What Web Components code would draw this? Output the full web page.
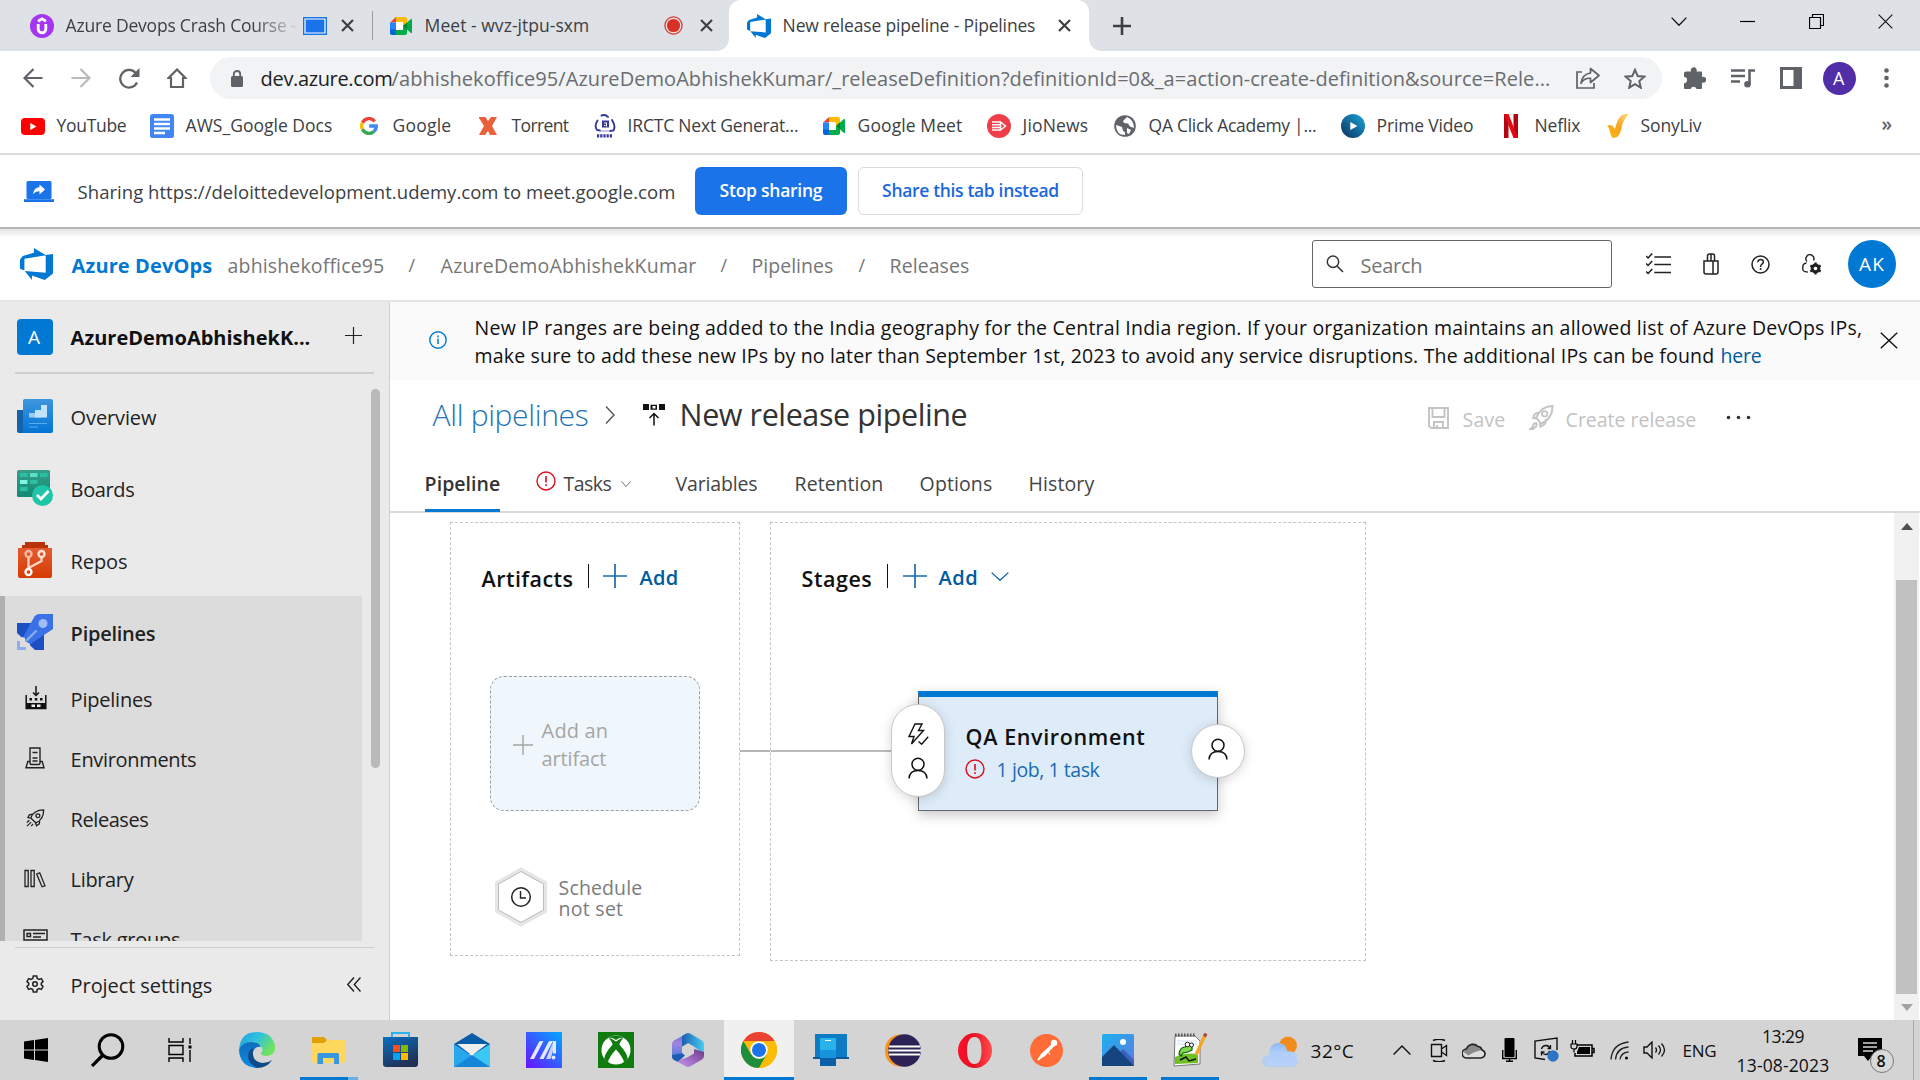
<!DOCTYPE html>
<html lang="en"><head><meta charset="utf-8"><title>New release pipeline - Pipelines</title>
<style>
html,body{margin:0;padding:0}
body{width:1920px;height:1080px;overflow:hidden;background:#fff;font-family:"Open Sans","Noto Sans",sans-serif;color:#3c4043}
</style></head><body>
<desktop-screen></desktop-screen>
<script>
const ICONS={
udemy:[24,24,'<circle cx="12" cy="12" r="12" fill="#a435f0"/><path d="M8.2 10v5a3.8 3.8 0 0 0 7.6 0v-5M8 7.3l4-2.4 4 2.4" fill="none" stroke="#fff" stroke-width="2.8"/>'],
share:[24,18,'<path d="M0 0h24v18H0z" fill="#1a73e8"/><path d="M2 2h20v14h-20z" fill="none" stroke="#fff" stroke-width="1.2"/>'],
x:[13,13,'<path d="M1 1l11 11M12 1L1 12" stroke="#3c4043" stroke-width="2.2"/>'],
thinx:[16,16,'<path d="M.7.7l14.6 14.6M15.3.7L.7 15.3" stroke="#111" stroke-width="1.2"/>'],
meet:[22,18,'<path d="M6 0H15q2 0 2 2V6L13 9V5H6z" fill="#ffba00"/><path d="M0 5.5L6 0V5.5z" fill="#ea4335"/><path d="M0 5.5H6V13H0z" fill="#2684fc"/><path d="M0 12.5H6V18H2q-2 0-2-2z" fill="#0066da"/><path d="M6 18V13H13V9L17 12V16q0 2-2 2z" fill="#00ac47"/><path d="M13 9L21 2q1-.5 1 .5V15.500q0 1-1 .4z" fill="#00ac47"/><path d="M13 9L17 5.500V12.500z" fill="#00832d"/><path d="M6 5h7v8H6z" fill="#fff"/>'],
rec:[19,19,'<circle cx="9.500" cy="9.500" r="8.600" fill="none" stroke="#d93025" stroke-width="1.200"/><circle cx="9.500" cy="9.500" r="6.600" fill="#d93025"/>'],
devops:[24,24,'<path d="M24 4.500V19.200L18 24 8.700 20.700V24L3.400 17.200 18.700 18.500V5.300zM18.900 5.400L10.100 0V3.600L2 6 0 8.600v6.900L3.200 16.900V8.100z" fill="#0078d4"/>'],
plus:[18,18,'<path d="M9 0v18M0 9h18" stroke="#3c4043" stroke-width="2.600"/>'],
thinplus:[24,24,'<path d="M12 0v24M0 12h24" stroke="currentColor" stroke-width="1.700"/>'],
chev:[16,9,'<path d="M.6.6L8 8.300 15.400.6" fill="none" stroke="currentColor" stroke-width="1.300"/>'],
up:[18,10,'<path d="M.6 9.400L9 1 17.400 9.400" fill="none" stroke="#111" stroke-width="1.400"/>'],
min:[15,15,'<path d="M0 7.500h15" stroke="#000" stroke-width="1.200"/>'],
restore:[15,15,'<path d="M.5 3.500h11v11H.5zM3.500 3.500V.5h11v11h-3" fill="none" stroke="#000" stroke-width="1.200"/>'],
back:[20,20,'<path d="M19.500 10H2M10.500 1L1.500 10l9 9" fill="none" stroke="currentColor" stroke-width="2.200"/>'],
fwd:[20,20,'<path d="M.5 10H18M9.500 1l9 9-9 9" fill="none" stroke="currentColor" stroke-width="2.200"/>'],
reload:[21,21,'<path d="M18 14.500a8.800 8.800 0 1 1-1.300-9.500l2.500 2.500" fill="none" stroke="#5f6368" stroke-width="2.300"/><path d="M20.500 0v9h-9z" fill="#5f6368"/>'],
home:[20,20,'<path d="M10 1.500L1.500 10H4v9h12v-9h2.500z" fill="none" stroke="#5f6368" stroke-width="2.200"/>'],
lock:[12,17,'<rect y="6" width="12" height="11" rx="1.500" fill="#5f6368"/><path d="M2.800 7V4.200a3.200 3.200 0 0 1 6.400 0V7" fill="none" stroke="#5f6368" stroke-width="1.800"/>'],
send:[24,22,'<path d="M6 5H1v16h17v-5" fill="none" stroke="#5f6368" stroke-width="1.700"/><path d="M14.500 6V1.500l8.500 7-8.500 7V11.300q-6.500-.4-9.500 5Q6 7.500 14.500 6z" fill="none" stroke="#5f6368" stroke-width="1.700" stroke-linejoin="round"/>'],
star:[22,21,'<path d="M11 1.800l2.700 6.300 6.600.6-5 4.400 1.500 6.600L11 16.200l-5.800 3.500 1.500-6.600-5-4.400 6.600-.6z" fill="none" stroke="#5f6368" stroke-width="2"/>'],
puzzle:[22,22,'<path d="M2 4.500H7a3 3 0 1 1 5.500 0H17q1 0 1 1V10a3 3 0 1 1 0 5.500V21q0 1-1 1H12.500a3 3 0 0 0-5.800 0H1q-1 0-1-1V16.200A3 3 0 0 0 0 10V6q0-1.500 2-1.500z" fill="#5f6368"/>'],
music:[24,20,'<path d="M0 2.500h14M0 8h14M0 13.500h9" stroke="#5f6368" stroke-width="2.300"/><path d="M18.500 16V2.500H24" fill="none" stroke="#5f6368" stroke-width="2.600"/><circle cx="16.500" cy="16.200" r="3.300" fill="#5f6368"/>'],
panel:[22,22,'<path d="M1.500 1.500h19v19h-19z" fill="#fff" stroke="#5f6368" stroke-width="3"/><path d="M13.500 1.500h7v19h-7z" fill="#5f6368"/>'],
dots:[5,20,'<g fill="#5f6368"><circle cx="2.500" cy="2.500" r="2.300"/><circle cx="2.500" cy="10" r="2.300"/><circle cx="2.500" cy="17.500" r="2.300"/></g>'],
youtube:[24,17,'<rect width="24" height="17" rx="4" fill="#f00"/><path d="M9.300 5v7l6.200-3.500z" fill="#fff"/>'],
docs:[24,24,'<rect width="24" height="24" rx="2.500" fill="#4285f4"/><path d="M4 5.500h16M4 10h16M4 14.500h16M4 19h11" stroke="#fff" stroke-width="2.400"/>'],
google:[18,18,'<g fill="none" stroke-width="3.400"><path d="M14.700 4.300A7.300 7.300 0 0 0 2.500 5.700" stroke="#ea4335"/><path d="M2.500 5.700a7.300 7.300 0 0 0 0 6.600" stroke="#fbbc05"/><path d="M2.500 12.300a7.300 7.300 0 0 0 11.400 2.200" stroke="#34a853"/><path d="M13.900 14.500A6.500 6.500 0 0 0 16.200 9H9.200" stroke="#4285f4"/></g>'],
torrent:[18,18,'<path d="M0 0H6.500L9 4 12 0h6l-1 2-4 7 5 9h-7L9 14l-3 4H0l1-2 4-7L0 1z" fill="#e8613a"/>'],
irctc:[22,24,'<g fill="none" stroke="#34379a" stroke-width="1.900" stroke-linecap="round"><path d="M7.500 1.500q4-1.500 6.500 1.500"/><path d="M3.500 6.500Q0 12 3 16l3 .5"/><path d="M18 6q4 6 1.500 10.500l-3.500.5"/></g><path d="M8 6.500h7v7H8z" fill="#34379a"/><path d="M10 9h2M12.500 8.500v4M10 11.500h1.500" stroke="#fff"/><path d="M6 17h10" stroke="#9fa1d4" stroke-width="1.200"/><path d="M3 21.800h16" stroke="#34379a" stroke-width="3.200" stroke-dasharray="2.200 1"/>'],
jio:[24,24,'<circle cx="12" cy="12" r="12" fill="#ef3e4a"/><path d="M5 8h8M5 10.700h8M5 13.400h8M5 16h8" stroke="#fff" stroke-width="1.500"/><path d="M13.500 8L18.500 12l-5 4z" fill="none" stroke="#fff" stroke-width="1.500"/>'],
globe:[22,22,'<circle cx="11" cy="11" r="10.800" fill="#5f6368"/><path d="M2 10l6 2 1 4 2 1v3q-9 0-9-10zM13 2l-4 4 1 2 4 .5 2 3 4 1.500Q20 5 13 2zM13 13l4 2-2 4-2-1z" fill="#fff"/>'],
prime:[24,24,'<defs><linearGradient id="p" x1="1" x2="0" y2="1"><stop stop-color="#1aa8dc"/><stop offset="1" stop-color="#0b2e5c"/></linearGradient></defs><circle cx="12" cy="12" r="12" fill="url(#p)"/><path d="M9.300 8v8l7-4z" fill="#fff"/>'],
netflix:[14,24,'<path d="M0 0h4.500v24H0zM9.500 0H14v24H9.500z" fill="#b1060f"/><path d="M0 0h4.500L14 24H9.500z" fill="#e50914"/>'],
sony:[22,24,'<defs><linearGradient id="s" x1="1" x2="0" y2="1"><stop stop-color="#fde08a"/><stop offset=".5" stop-color="#f4a41c"/><stop offset="1" stop-color="#fcb813"/></linearGradient></defs><path d="M0 12q4-3 8 3Q11 3 15 1q4-2 7-1-5 5-7 12-2 12-8 12-3 0-4-6-1-5-3-6z" fill="url(#s)"/>'],
infoshare:[30,21,'<rect x="2.500" width="25" height="18" rx="1.500" fill="#1a73e8"/><path d="M0 18.200h30v2.800H0z" fill="#1a73e8"/><path d="M15.500 6V3.500L21 8.500l-5.500 5V10.300q-4-.3-6.500 3Q9.500 7 15.500 6z" fill="#fff"/>'],
search:[18,18,'<circle cx="7" cy="6.700" r="5.700" fill="none" stroke="#333" stroke-width="1.500"/><path d="M11 11l6 6" stroke="#333" stroke-width="1.600"/>'],
list:[24,22,'<path d="M8 4h16M8 11.500h16M8 19.500h16M0 3l2 2 4-4.500M0 10.500l2 2L6 8M0 18.500l2 2L6 16" fill="none" stroke="#222" stroke-width="1.500"/>'],
bag:[16,22,'<path d="M1 8h14v11q0 2-2 2H3q-2 0-2-2zM10 8v13M4.500 8V3q0-2 2-2h3q2 0 2 2v5M8 1v7" fill="none" stroke="#222" stroke-width="1.500"/>'],
help:[19,19,'<circle cx="9.500" cy="9.500" r="8.500" fill="none" stroke="#222" stroke-width="1.500"/><path d="M6.900 7.300q0-2.800 2.700-2.800t2.700 2.600Q12.200 8.400 10.500 9.500 9.600 10.200 9.600 12" fill="none" stroke="#222" stroke-width="1.500"/><circle cx="9.600" cy="14" r="1" fill="#222"/>'],
usergear:[20,21,'<path d="M5 7.500A4 4 0 1 1 11.500 6.500M4.500 9Q.8 9.500.8 13v3q1.200 2.200 5 2" fill="none" stroke="#222" stroke-width="1.400"/><circle cx="13.500" cy="14.500" r="3.400" fill="none" stroke="#222" stroke-width="3"/><path d="M13.500 8.500v12M8.300 11.500l10.400 6M18.700 11.500l-10.400 6" stroke="#222" stroke-width="2.300"/><circle cx="13.500" cy="14.500" r="1.800" fill="#fff"/>'],
overview:[36,34,'<defs><linearGradient id="o" x2="0" y2="1"><stop stop-color="#3e96df"/><stop offset="1" stop-color="#0274d5"/></linearGradient></defs><path d="M0 11h8v23H2q-2 0-2-2z" fill="#1462aa"/><path d="M6 1.500Q6 0 8 0h26q2 0 2 2v30q0 2-2 2H4q2 0 2-2z" fill="url(#o)"/><path d="M12 14h6v-3h6v7.500H12z" fill="#9ccbf4"/><path d="M18 11h6V6h6v12.500H18z" fill="#c3e2fb"/><path d="M12 24.500h18M12 28h9" stroke="#56acec"/>'],
boards:[36,36,'<defs><linearGradient id="b" x2="0" y2="1"><stop stop-color="#369f89"/><stop offset="1" stop-color="#118b73"/></linearGradient></defs><rect width="33" height="27" rx="1.500" fill="url(#b)"/><path d="M3 3h7.500v4H3zM23 3h7.500v4H23zM13 10h7.500v4H13zM3 17h7.500v4H3z" fill="#2dbfa3"/><path d="M13 3h7.500v4H13z" fill="#5cdfc7"/><path d="M3 10h7.500v4H3z" fill="#7ff5df"/><circle cx="25.500" cy="25.500" r="10.500" fill="#1fc5a8"/><path d="M20 25l4 4 7.500-8" fill="none" stroke="#fff" stroke-width="2.800"/>'],
repos:[34,36,'<defs><linearGradient id="r" x2="0" y2="1"><stop stop-color="#e35c31"/><stop offset="1" stop-color="#d63b02"/></linearGradient></defs><path d="M7 0h20v3h3v4H4V3h3z" fill="#b8330a"/><path d="M0 6h34v28q0 2-2 2H2q-2 0-2-2z" fill="url(#r)"/><g fill="none" stroke="#f9b9a0" stroke-width="2.300"><path d="M10.500 15v12M23.500 15.500v3.500l-12 6.500" stroke="#ffd5c5"/><circle cx="10.500" cy="12" r="3"/><circle cx="23.500" cy="12" r="3" stroke="#ffe4da"/><circle cx="10.500" cy="30" r="3" stroke="#fff"/></g>'],
pipes:[36,36,'<path d="M0 9h14l13 12v15h-9L0 19z" fill="#1d4fc4"/><path d="M17.500 2.500Q19 0 22 0h14v15L12 31l-7-6z" fill="#3a71e6"/><path d="M5 23l3 1v3l5 3v3H3l-3-2V24z" fill="#dcdcdc"/><path d="M0 27h3v6h6v3H0z" fill="#8cacf0"/><path d="M9 27L19.500 16.500" stroke="#8cabf4" stroke-width="2.400"/><circle cx="26" cy="9.500" r="4.500" fill="#a0bcfa"/>'],
factory:[22,24,'<path d="M11 0v9M8 6.500L11 9.500 14 6.500M1.200 9v13.500h19.600V9" fill="none" stroke="#111" stroke-width="1.500"/><path d="M4.500 12h2.500v2.500H4.500zM9.800 12h2.500v2.500H9.800zM15 12h2.500v2.500H15zM1 17h20v6H1z" fill="#111"/><path d="M6.500 18.500h3.500v2.500H6.500zM12 18.500h3.500v2.500H12z" fill="#eee"/>'],
env:[20,22,'<path d="M5 16V1h10v15q0 1.500-1.500 1.500H6.500Q5 17.500 5 16zM5 14.500H2.800L1 20.800h18l-1.800-6.300H15M7.500 5.500h5M7.500 11h5M7.500 14h5" fill="none" stroke="#222" stroke-width="1.400"/>'],
rocket:[20,20,'<path d="M5 10Q8 1 18.500 1 19 11 10.500 15.500zM8 5.500L3.500 6.500 2 9.500l4 1M14.500 12l-.5 4.500L11 18.500 9.500 14" fill="none" stroke="currentColor" stroke-width="1.400"/><circle cx="12.500" cy="7.500" r="2" fill="none" stroke="currentColor" stroke-width="1.400"/><path d="M3.500 12.500L1 15M5.500 14.500L1 19M7.500 16.500L5.500 19" stroke="currentColor" stroke-width="1.300"/>'],
rocket2:[24,24,'<path d="M7 12Q11 1.500 22.500 1 23 13 11.500 18zM10 7.500Q5 7 4 12.500l3 .5M16 13.500Q17 18.500 11 21l-.500-3.500M4 20.500q0-3.500 3-3 1.500 3-3 5.500H1.500z" fill="none" stroke="currentColor" stroke-width="1.900"/><circle cx="15" cy="8.500" r="2.600" fill="none" stroke="currentColor" stroke-width="1.700"/>'],
library:[22,19,'<path d="M1 1.500h3.200v16H1zM7 1.500h3.200v16H7zM12.700 5l3-1.200 5.300 13-3 1z" fill="none" stroke="#222" stroke-width="1.300"/>'],
task:[25,22,'<path d="M1 1h23v10H1z" fill="none" stroke="#222" stroke-width="1.500"/><path d="M4 4.500h3.500v3H4zM10 4.500h12M10 8h8" fill="none" stroke="#222" stroke-width="1.400"/>'],
gear:[18,18,'<path d="M7.300 1h3.400l.5 2.400 1.900 1 2.300-.8L17 6.500l-1.700 1.600v1.800L17 11.500l-1.600 2.900-2.300-.8-1.900 1-.5 2.400H7.300l-.5-2.400-1.900-1-2.300.8L1 11.500l1.700-1.600V8.100L1 6.500l1.600-2.900 2.300.8 1.900-1z" fill="none" stroke="#222" stroke-width="1.500"/><circle cx="9" cy="9" r="2.300" fill="none" stroke="#222" stroke-width="1.500"/>'],
dbl:[14,15,'<path d="M7 .5L.8 7.500 7 14.500M13.500.5L7.300 7.500l6.200 7" fill="none" stroke="#222" stroke-width="1.400"/>'],
info:[18,18,'<circle cx="9" cy="9" r="8.200" fill="none" stroke="#0078d4" stroke-width="1.400"/><path d="M9 7.500V13M9 4.500v1.700" stroke="#0078d4" stroke-width="1.500"/>'],
gt:[10,18,'<path d="M1 .5L9 9l-8 8.500" fill="none" stroke="#555" stroke-width="1.400"/>'],
relicon:[22,22,'<path d="M0 0h6v6H0zM16 0h6v6h-6zM7.500.7h6.500v5H7.500z" fill="#111"/><path d="M9.500 2h3v2.500h-3z" fill="#fff"/><path d="M11 21.500V9.500M6.500 14L11 9.500l4.500 4.500" fill="none" stroke="#111" stroke-width="1.500"/>'],
save:[21,22,'<path d="M1 1h19v20H3l-2-2zM4.500 1v9h12V1M6 21v-6h9v6M9 18v3" fill="none" stroke="#c4c4c4" stroke-width="1.900"/>'],
more:[26,5,'<g fill="#333"><circle cx="2.500" cy="2.500" r="1.800"/><circle cx="12.500" cy="2.500" r="1.800"/><circle cx="22.500" cy="2.500" r="1.800"/></g>'],
alert:[20,20,'<circle cx="10" cy="10" r="9" fill="none" stroke="#e00b1c" stroke-width="1.400"/><path d="M10 5v6.500M10 13.200v1.700" stroke="#e00b1c" stroke-width="1.600"/>'],
hex:[54,60,'<path d="M27 2.500L51 16v28L27 57.500 3 44V16z" fill="#fff" stroke="#e6e6e6" stroke-width="4"/><path d="M27 4.500L49.500 17v26L27 55.500 4.500 43V17z" fill="none" stroke="#bbb"/><circle cx="27" cy="30" r="9.300" fill="none" stroke="#222" stroke-width="1.500"/><path d="M26.500 24v7h5.500" fill="none" stroke="#222" stroke-width="1.400"/>'],
bolt:[21,22,'<path d="M7 1H14L10.500 7.500H15.500L3.500 21 6 13.500H1zM10.500 18.500l3.200 2.700 6.500-7.500" fill="none" stroke="#111" stroke-width="1.400"/>'],
person:[20,22,'<circle cx="10" cy="7.200" r="6" fill="none" stroke="#111" stroke-width="1.500"/><path d="M1 21.500q.5-8 9-8t9 8" fill="none" stroke="#111" stroke-width="1.500"/>'],
win:[24,24,'<path d="M0 3.500L10 2v9.500H0zM11 1.900L24 0v11.500H11zM0 12.500h10V22L0 20.500zM11 12.500h13V24l-13-1.900z" fill="#000"/>'],
tsearch:[34,34,'<circle cx="20" cy="13.500" r="11.800" fill="none" stroke="#000" stroke-width="3"/><path d="M11.500 22.500L1 33" stroke="#000" stroke-width="3.200"/>'],
tview:[24,24,'<path d="M1 0v4h14V0M1 24v-4h14v4M1 7.500h14v9H1zM22 0v6M22 12v12" fill="none" stroke="#000" stroke-width="1.400"/><path d="M20.500 7.500h3v3h-3z"/>'],
edge:[36,36,'<defs><linearGradient id="e" x2="1" y2=".5"><stop stop-color="#1d9de0"/><stop offset=".5" stop-color="#2fc2df"/><stop offset="1" stop-color="#6fe35e"/></linearGradient><linearGradient id="e2" x2="0" y2="1"><stop stop-color="#0d6dbd"/><stop offset="1" stop-color="#0f8bdf"/></linearGradient></defs><path d="M0 18Q1 0 18 0q15 0 18 14 1 9-8 10-6 0-6-3 3-3 0-7-6-6-14-3-6 2-8 7z" fill="url(#e)"/><path d="M0 18Q3 10 12 10q8 0 10 5-6-1-8 5-1 8 6 14l-2 2Q1 35 0 18z" fill="url(#e2)"/><path d="M14 20q-1 10 10 11 5 0 9-3-5 8-15 8-9-5-9-12 0-6 5-8z" fill="#114a8b"/>'],
folder:[33,27,'<path d="M0 0h12l3 3-2 4H0z" fill="#e0a100"/><path d="M0 6h12l3-3h18v21q0 2-2 2H2q-2 0-2-2z" fill="#ffd75e"/><path d="M5.500 27V17.500q0-1.500 1.500-1.500h18.500q1.500 0 1.500 1.500v9.500h-5v-6h-11v6z" fill="#3a96dd"/>'],
store:[35,36,'<defs><linearGradient id="t" x2=".5" y2="1"><stop stop-color="#0a6fc2"/><stop offset="1" stop-color="#203156"/></linearGradient></defs><path d="M9 5V1h17v4" fill="none" stroke="#2db2ec" stroke-width="2"/><path d="M0 5h35v27q0 3-3 3H3q-3 0-3-3z" fill="url(#t)"/><path d="M10 13h7v7h-7z" fill="#f25022"/><path d="M18 13h7v7h-7z" fill="#7fba00"/><path d="M10 21h7v7h-7z" fill="#00a4ef"/><path d="M18 21h7v7h-7z" fill="#ffb900"/>'],
mail:[36,34,'<path d="M0 11L18 0l18 11v10H0z" fill="#0a5ba8"/><path d="M0 11l18 12v11H0z" fill="#28a8ea"/><path d="M36 11v23H0z" fill="#3cc8f5"/><path d="M0 34h36L18 22z" fill="#1686d9"/><path d="M3 11h30L18 22.500z" fill="#eee"/>'],
asus:[36,36,'<defs><linearGradient id="a" x1="1" x2="0" y2="1"><stop stop-color="#00a8ff"/><stop offset="1" stop-color="#6a12ff"/></linearGradient></defs><path d="M0 0h36v36H0z" fill="url(#a)"/><path d="M4 27h4L17.500 9H15q-1.500 0-2.200 1.300zM13.500 27h4L27 9h-2.500q-1.500 0-2.200 1.300z" fill="#e3e8ff"/><path d="M20 27h4.500L30 9h-2.500z" fill="#c9d4ff"/><path d="M27 9h3v12.500h-3z" fill="#e3e8ff"/><circle cx="27.500" cy="25.500" r="1.900" fill="#dfe6ff"/>'],
xbox:[36,36,'<path d="M0 0h36v36H0z" fill="#107c10"/><circle cx="18" cy="18" r="14.500" fill="#fff"/><path d="M9 6.600Q13 4.500 18 8q5-3.500 9-1.400-4-3.100-9-3.100T9 6.600zM10.500 5.700Q14 6.500 18 9.500q4-3 7.500-3.800Q22 9.500 21.300 12.500 30 22 29.600 27q-1.600 2-3.600 3.300Q25 25 18 17.500 11 25 10 30.300 8 29 6.400 27 6 22 14.700 12.500 14 9.500 10.500 5.700z" fill="#107c10"/>'],
m365:[32,34,'<defs><linearGradient id="m" x2="0" y2="1"><stop stop-color="#5b6fd0"/><stop offset=".4" stop-color="#a583e0"/><stop offset="1" stop-color="#4f7fdb"/></linearGradient><linearGradient id="m2" x2="1"><stop stop-color="#1c5fb0"/><stop offset="1" stop-color="#45cdf2"/></linearGradient><linearGradient id="m3" x1="1" x2="0" y2="1"><stop stop-color="#6a3a86"/><stop offset="1" stop-color="#c996f2"/></linearGradient></defs><path d="M14 1L2 7.500Q0 8.600 0 11v13l10-4v-6.500l6-3.500z" fill="url(#m)"/><path d="M14 .6Q16 -.4 18 .6L30 7.500Q32 8.600 32 11v10L22 13.500 16 10l-6 3.500V3z" fill="url(#m2)"/><path d="M0 22l10-2 3 2.500L6 29 2 27Q0 26 0 24z" fill="#1d5cb5"/><path d="M22 16l10 3v4q0 2.400-2 3.500L18 33.400q-2 1-4 0L5 28.500l11-4.500 6-3.500z" fill="url(#m3)"/>'],
chrome:[36,36,'<circle cx="18" cy="18" r="18" fill="#fbbc05"/><path d="M2.400 9A18 18 0 0 1 33.600 9H18z" fill="#ea4335"/><path d="M2.400 9L10.200 22.500 18 27l7.800-4.500L18 36A18 18 0 0 1 2.400 9z" fill="#1e8e3e"/><path d="M25.800 22.500L18 36A18 18 0 0 0 33.600 9H18z" fill="#fbbc05"/><circle cx="18" cy="18" r="8.700" fill="#fff"/><circle cx="18" cy="18" r="7" fill="#1a73e8"/>'],
phone:[36,32,'<path d="M2 0h32v24H2z" fill="#0f7ac4"/><path d="M0 23h36v2H0z" fill="#0a5a9c"/><rect x="7" y="4" width="16" height="28" rx="1" fill="#28b4ea"/><path d="M7 24h16v8H7z" fill="#0c5ea8"/><path d="M7 16h16v8H7z" fill="#1793db"/><path d="M12 6.500h6" stroke="#fff"/>'],
eclipse:[36,33,'<path d="M16 0Q0 2 0 16.500T16 33Q5 28 5 16.500T16 0z" fill="#f7941e"/><circle cx="19.500" cy="16.500" r="16.300" fill="#2c2255"/><path d="M4 12.500h31M3.500 16.500h32.500M4 20.500h31" stroke="#fff" stroke-width="1.900"/>'],
opera:[34,35,'<defs><linearGradient id="q" x2="1"><stop stop-color="#fb1128"/><stop offset=".45" stop-color="#e81022"/><stop offset="1" stop-color="#ff4d4d"/></linearGradient></defs><path fill-rule="evenodd" d="M17 0a17 17.500 0 0 1 0 35 17 17.500 0 0 1 0-35zM16.500 4C11 4 9 10 9 17.500S11 31 16.500 31 23.500 25 23.500 17.500 22 4 16.500 4z" fill="url(#q)"/>'],
postman:[33,33,'<circle cx="16.500" cy="16.500" r="16.500" fill="#ff6c37"/><circle cx="24" cy="9" r="3.200" fill="#fff"/><path d="M12 20L22 11l1 1.500-9 9.500zM12 20l-4 6 7-5z" fill="#fff" stroke="#fff" stroke-width="1.500"/><path d="M18 17l2 4" stroke="#fff"/>'],
photos:[32,32,'<defs><linearGradient id="h" x2="1" y2="1"><stop stop-color="#1fb0ef"/><stop offset="1" stop-color="#5b7be0"/></linearGradient></defs><rect width="32" height="32" rx="1.500" fill="url(#h)"/><circle cx="21" cy="8" r="3" fill="#fff"/><path d="M18 18l3-3L32 26v6H18z" fill="#3c60bd"/><path d="M0 23L12 11 32 32H0z" fill="#15457f"/>'],
npp:[35,34,'<path d="M2 3h20l5 5v23L1 33z" fill="#fff" stroke="#777"/><path d="M2 2h20" stroke="#555" stroke-width="3" stroke-dasharray="1.500 1.500"/><path d="M4 8h20M4 11h20" stroke="#cde"/><path d="M2 24q10-5 23-3v9L2 31z" fill="#6cc024"/><path d="M6 21q1-7 6-7 4-4 7-1v4l-4 2-5 1-2 3z" fill="#7bdc4a" stroke="#151" stroke-width="1.200"/><circle cx="14.500" cy="11.500" r="2.300" fill="#fff" stroke="#222"/><circle cx="18.500" cy="12" r="2" fill="#fff" stroke="#222"/><path d="M7 27l6-3 3 4 7-2" stroke="#111" stroke-width="1.400" fill="none"/><path d="M23 22L32 2" stroke="#f5a623" stroke-width="3.200"/><path d="M31.500 3.500l1.500-3" stroke="#a44" stroke-width="3.200"/>'],
weather:[37,31,'<defs><linearGradient id="w" x2="0" y2="1"><stop stop-color="#8fbaf6"/><stop offset="1" stop-color="#d9e8fc"/></linearGradient></defs><circle cx="26" cy="9.500" r="9" fill="#f28c1e"/><path d="M8 30a8 8 0 0 1-1-12Q8 7 16 7q8 0 9 8 10 0 11 7 0 8-9 8z" fill="url(#w)"/><path d="M6 31Q0 30 0 25q0-6 8-6 3-5 9-3 4 2 4 5 3-3 8-2 7 3 7 7 0 5-7 5z" fill="#aecbf8" opacity=".75"/>'],
meetnow:[18,23,'<path d="M3 1.500q6-2.500 12 0M3 21.500q6 2.500 12 0M1.500 5.500h10v12h-10zM11.500 10l5-3.500v10l-5-3.500" fill="none" stroke="#111" stroke-width="1.400"/>'],
cloud:[24,17,'<path d="M5 16a4.500 4.500 0 0 1-.6-9A7 7 0 0 1 16 4.500q3 0 4 3.500 3 1 3 4t-4 4z" fill="#ddd"/><path d="M1.500 10Q2 7.500 5 7q.5-5 5-5.500 4 0 5.500 3.500 3 0 4 3l-8 2.500-5 3z" fill="#8a8a8a"/><path d="M5 16a4.500 4.500 0 0 1-.6-9A7 7 0 0 1 16 4.500q3 0 4 3.500 3 1 3 4t-4 4z" fill="none" stroke="#222" stroke-width="1.600"/>'],
mic:[15,24,'<rect x="2.500" width="10" height="19" rx="1" fill="#000"/><path d="M.7 12v8.500h13.600V12M7.500 20v3M4 23.300h7" fill="none" stroke="#000" stroke-width="1.400"/>'],
sync:[25,25,'<path d="M23 13V1L1 4v17l10 1.500" fill="none" stroke="#111" stroke-width="1.400"/><path d="M7.500 12q1-3.500 4.500-3.500 3 0 4 3M16.500 8v3.500h-3M15.500 14q-1 3.500-4 3.500-2.500 0-4-2.500M7.500 18.500V15h3" fill="none" stroke="#111" stroke-width="1.300"/><circle cx="19" cy="19" r="5.700" fill="#2d74c4"/>'],
battery:[25,18,'<path d="M6 5h16v11H5v-3M22 8.500h2v4h-2" fill="none" stroke="#000" stroke-width="1.500"/><path d="M9 7h11v7H7v-2z"/><path d="M1 4h6v2.500q0 2.500-3 2.500T1 6.500zM2.500 4V0M5.500 4V0M4 9.500v3" fill="#d4d4d4" stroke="#000" stroke-width="1.200"/>'],
wifi:[19,19,'<path d="M1 18.500Q2 3 18.500 1M5.500 18.500Q6.500 7 18.500 6M10 18.500Q11 11.500 18.500 11" fill="none" stroke="#222" stroke-width="1.300"/><circle cx="16.500" cy="17" r="1.500"/>'],
vol:[23,18,'<path d="M1 6h3l5-5v16l-5-5H1z" fill="none" stroke="#111" stroke-width="1.400"/><path d="M12.500 6.500q2 2.500 0 5M15.500 4.500q4 4.500 0 9M18.500 2.500q6 6.500 0 13" fill="none" stroke="#111" stroke-width="1.300"/>'],
note:[24,24,'<path d="M0 0h24v18H14l-4 5-4-5H0z" fill="#000"/><path d="M5 5h14M5 9h14M5 13h10" stroke="#d4d4d4" stroke-width="1.300"/>'],
tri:[12,7,'<path d="M0 7h12L6 0z" fill="#505050"/>'],
trid:[12,7,'<path d="M0 0h12L6 7z" fill="#a3a3a3"/>']
};
const px=(el,a)=>Number(el.getAttribute(a)||0);
class UiIcon extends HTMLElement{connectedCallback(){if(this.shadowRoot)return;
 const [vw,vh,s]=ICONS[this.getAttribute('name')],w=px(this,'w')||vw,h=px(this,'h')||vh*(w/vw);
 this.attachShadow({mode:'open'}).innerHTML=`<style>:host{display:block;flex:none;width:${w}px;height:${h}px;margin-left:${px(this,'g')}px;margin-top:${px(this,'t')}px}svg{display:block}</style><svg width="${w}" height="${h}" viewBox="0 0 ${vw} ${vh}" preserveAspectRatio="none">${s}</svg>`;}}
customElements.define('ui-icon',UiIcon);
/* A single text line whose tracking is adjusted so that it fills its column. */
class UiText extends HTMLElement{connectedCallback(){if(this.shadowRoot)return;
 const w=px(this,'w'),s=px(this,'s')||20,l=px(this,'l')||Math.round(s*1.4);
 this.attachShadow({mode:'open'}).innerHTML=`<style>:host{display:block;flex:none;white-space:nowrap;width:${w}px;height:${l}px;line-height:${l}px;font-size:${s}px;font-weight:${this.getAttribute('b')||400};${this.hasAttribute('c')?'color:'+this.getAttribute('c')+';':''}margin-left:${px(this,'g')}px;margin-top:${px(this,'t')}px}span{display:inline-block;margin-left:-.4px}</style><span><slot></slot></span>`;
 const sp=this.shadowRoot.querySelector('span'),n=this.textContent.length;
 sp.style.letterSpacing=((w+.7-sp.getBoundingClientRect().width)/n)+'px';}}
customElements.define('ui-text',UiText);
const I=(n,w,g=0,h='',t=0,c='')=>`<ui-icon name="${n}" w="${w}" g="${g}" h="${h}" t="${t}" ${c?`style="color:${c}"`:''}></ui-icon>`;
const T=(x,w,s,g=0,c='',b='',t=0,l='')=>`<ui-text w="${w}" s="${s}" g="${g}" t="${t}" ${l?`l="${l}"`:''} ${c?`c="${c}"`:''} ${b?`b="${b}"`:''}>${x}</ui-text>`;
const def=(n,css,html)=>customElements.define(n,class extends HTMLElement{connectedCallback(){if(this.shadowRoot)return;this.attachShadow({mode:'open'}).innerHTML=`<style>:host{box-sizing:border-box;flex:none}*{box-sizing:border-box}${css}</style>${html}`}});

def('browser-tabs',`:host{display:flex;align-items:center;height:51px;background:#dee1e6}.tab{display:flex;align-items:center;height:51px;flex:none}.a{width:373px}.b{width:356px}.c{width:360px;background:#fff;border-radius:12px 12px 0 0;position:relative}.c:before,.c:after{content:"";position:absolute;bottom:0;width:12px;height:12px}.c:before{left:-12px;background:radial-gradient(circle at 0 0,#dee1e6 11.500px,#fff 12px)}.c:after{right:-12px;background:radial-gradient(circle at 100% 0,#dee1e6 11.500px,#fff 12px)}.fade{flex:none;-webkit-mask-image:linear-gradient(90deg,#000 82%,rgba(0,0,0,.1) 100%)}.sep{width:1px;height:29px;background:#9a9da1;margin-left:18px;flex:none}`,
`<div class="tab a">${I('udemy',24,30)}<div class="fade">${T('Azure Devops Crash Course -',230,17.5,12)}</div>${I('share',24,7,18)}${I('x',13,14)}<div class="sep"></div></div>
<div class="tab b">${I('meet',22,17,18)}${T('Meet - wvz-jtpu-sxm',164,17.5,13)}${I('rec',19,75)}${I('x',13,17)}</div>
<div class="tab c">${I('devops',24,18)}${T('New release pipeline - Pipelines',252,17.5,12)}${I('x',13,23)}</div>
${I('plus',18,24)}${I('chev',16,540,9,-8,'#111')}${I('min',15,53,15,-8)}${I('restore',15,54,15,-8)}${I('thinx',15,54,15,-8)}`);
def('browser-toolbar',`:host{display:flex;align-items:center;height:54px;padding-left:23px}.omni{display:flex;align-items:center;height:42px;width:1452px;border-radius:21px;background:#f1f3f4;margin-left:23px;flex:none}.av{width:33px;height:33px;border-radius:50%;background:#512da8;display:flex;align-items:center;justify-content:center;margin-left:21px;flex:none}`,
`${I('back',20,0,20,0,'#5f6368')}${I('fwd',20,28,20,0,'#b8babd')}${I('reload',21,28)}${I('home',20,27,20)}
<div class="omni">${I('lock',12,21,17)}${T('dev.azure.com',131,20,18,'#202124','',1)}${T('/abhishekoffice95/AzureDemoAbhishekKumar/_releaseDefinition?definitionId=0&amp;_a=action-create-definition&amp;source=Rele...',1158,20,0,'#6a6d71','',1)}${I('send',24,26,22)}${I('star',22,24)}</div>
${I('puzzle',22,22)}${I('music',24,25)}${I('panel',22,25)}<div class="av">${T('A',12,18,0,'#fff')}</div>${I('dots',5,28,20)}`);
const bm=[['youtube',24,21,'YouTube',69],['docs',24,24,'AWS_Google Docs',146],['google',18,28,'Google',58],['torrent',18,28,'Torrent',56],['irctc',22,26,'IRCTC Next Generat...',170],['meet',22,25,'Google Meet',104],['jio',24,25,'JioNews',65],['globe',22,26,'QA Click Academy |...',167],['prime',24,25,'Prime Video',96],['netflix',14,31,'Neflix',45],['sony',22,27,'SonyLiv',60]];
const tg=[12,12,15,15,12,13,12,13,12,17,12];
def('bookmark-bar',`:host{display:flex;align-items:center;height:50px;border-bottom:2px solid #dadce0;padding-bottom:6px}`,bm.map((b,i)=>I(b[0],b[1],b[2])+T(b[3],b[4],17.5,tg[i],'','',-1)).join('')+T('»',11,19,181,'#5f6368','600',-3));
def('share-bar',`:host{display:flex;align-items:center;height:74px;border-bottom:2px solid #b4b4b4}.p{display:flex;align-items:center;justify-content:center;height:48px;border-radius:6px;flex:none}.one{width:152px;background:#1a73e8;margin-left:20px}.two{width:225px;border:1px solid #dadce0;margin-left:11px}`,
`${I('infoshare',30,24)}${T('Sharing https://deloittedevelopment.udemy.com to meet.google.com',597,18.5,24,'','',2)}<div class="p one">${T('Stop sharing',102,17.5,0,'#fff','600',-1)}</div><div class="p two">${T('Share this tab instead',176,17.5,0,'#1a67e0','600',-1)}</div>`);
def('azure-header',`:host{display:flex;align-items:center;height:73px;border-bottom:2px solid #e4e4e4;padding-bottom:1px;background:linear-gradient(#e4e4e4,#fff 9px);color:#767676}.s{display:flex;align-items:center;width:300px;height:48px;border:1.500px solid #666;border-radius:3px;margin-left:343px;background:#fff;flex:none}.av{width:48px;height:48px;border-radius:50%;background:#0078d4;display:flex;align-items:center;justify-content:center;margin-left:26px;flex:none}`,
`${I('devops',33,20,32)}${T('Azure DevOps',140,20,19,'#0078d4','700',3)}${T('abhishekoffice95',156,19.5,16,'','',2)}${T('/',7,18,25,'','',2)}${T('AzureDemoAbhishekKumar',255,19.5,25,'','',2)}${T('/',7,18,25,'','',2)}${T('Pipelines',81,19.5,24,'','',2)}${T('/',7,18,26,'','',2)}${T('Releases',79,19.5,24,'','',2)}
<div class="s">${I('search',18,13)}${T('Search',61,20,17,'','',3)}</div>${I('list',25,34,22)}${I('bag',16,32,22)}${I('help',19,32)}${I('usergear',20,32)}<div class="av">${T('AK',25,19,0,'#fff')}</div>`);
const sub=[['factory',22,24,25,'Pipelines',81],['env',20,22,25,'Environments',125],['rocket',19,18,26,'Releases',77],['library',22,19,24,'Library',62],['task',25,22,23,'Task groups',109]];
def('azure-nav',`:host{display:flex;flex-direction:column;width:390px;height:718px;background:#eaeaea;border-right:1.500px solid #cfcfcf;color:#222}.r{display:flex;align-items:center;flex:none}.top{height:70px}.hr{height:2px;background:#cfcfcf;margin:0 15px 0 15px;flex:none}.sq{width:36px;height:36px;border-radius:4px;background:#0078d4;display:flex;align-items:center;justify-content:center;margin-left:17px}.scroll{display:flex;height:567px;overflow:hidden;flex:none}.list{width:362px;padding-top:6px}.m{height:72px}.grp{background:#dcdcdc;border-left:5px solid #b0b0b0;height:400px}.s{height:60px}.bar{width:9px;height:379px;border-radius:5px;background:#b9b9b9;margin:15px 0 0 9px}.gap{height:6px;flex:none}.thin{height:1px}.bot{height:73px}`,
`<div class="r top"><div class="sq">${T('A',13,19,0,'#fff')}</div>${T('AzureDemoAbhishekK...',239,20,18,'#111','700',1)}${I('thinplus',17,35,17,-3,'#222')}</div><div class="hr"></div>
<div class="scroll"><div class="list"><div class="r m">${I('overview',36,17)}${T('Overview',85,20,18,'','',4)}</div><div class="r m">${I('boards',36,17)}${T('Boards',63,20,18,'','',4)}</div><div class="r m">${I('repos',34,18)}${T('Repos',56,20,19,'','',4)}</div>
<div class="grp"><div class="r m">${I('pipes',36,12)}${T('Pipelines',84,20,18,'','600',4)}</div>${sub.map(a=>`<div class="r s">${I(a[0],a[1],a[3]-5,a[2],a[0]=='task'?4:0)}${T(a[4],a[5],20,71-a[3]-a[1],'','',3)}</div>`).join('')}</div></div><div class="bar"></div></div>
<div class="gap"></div><div class="hr thin"></div><div class="r bot">${I('gear',18,26,18,-1)}${T('Project settings',141,20,27,'','',3)}${I('dbl',14,135,15,-1)}</div>`);
def('info-banner',`:host{display:flex;align-items:center;height:78px;background:#fafafa;color:#111;padding-left:39px}.l{display:flex}.c{margin-left:28px;padding-top:1px}.l+.l{margin-top:1px}`,
`${I('info',18,0,18,-2)}<div class="c"><div class="l">${T('New IP ranges are being added to the India geography for the Central India region. If your organization maintains an allowed list of Azure DevOps IPs,',1387,19.5)}</div><div class="l">${T('make sure to add these new IPs by no later than September 1st, 2023 to avoid any service disruptions. The additional IPs can be found',1239,19.5)}${T('here',40,19.5,7,'#005a9e')}</div></div>${I('thinx',18,18,17,-2)}`);
def('pipeline-title',`:host{display:flex;align-items:center;height:70px;padding-left:43px}`,
`${T('All pipelines',155,30,0,'#2272b4','300')}${I('gt',10,17,18)}${I('relicon',22,28)}${T('New release pipeline',287,30.5,15,'#333','',-1)}${I('save',21,461,22,5)}${T('Save',42,19.5,14,'#c2c2c2','',9)}${I('rocket2',25,24,25,5,'#c4c4c4')}${T('Create release',130,19.5,12,'#c2c2c2','',9)}${I('more',26,30,5,4)}`);
def('pipeline-tabs',`:host{display:flex;height:63px;border-bottom:2px solid #d9d9d9;padding-left:35px;color:#444;align-items:center}.on{height:62px;display:flex;align-items:center;border-bottom:3px solid #0078d4;padding-top:8px;flex:none}`,
`<div class="on">${T('Pipeline',75,19.5,0,'#333','600')}</div>${I('alert',20,36,20,0)}${T('Tasks',47,19.5,8,'','',5)}${I('chev',10,10,6,6,'#555')}${T('Variables',81,19.5,45,'','',5)}${T('Retention',88,19.5,38,'','',5)}${T('Options',72,19.5,37,'','',5)}${T('History',65,19.5,37,'','',5)}`);
def('artifacts-panel',`:host{display:block;width:290px;height:434px;border:1px dashed #c4c4c4}.h{display:flex;align-items:center;height:49px;margin-top:30px}.sep{width:1px;height:24px;background:#111;margin-left:15px;margin-top:-4px}.card{display:flex;align-items:center;width:210px;height:135px;margin:74px 0 0 39px;border:1px dashed #9d9d9d;border-radius:14px;background:#eff6fc}.tx{padding-top:2px}.sch{display:flex;align-items:center;margin:56px 0 0 43px}`,
`<div class="h">${T('Artifacts',91,21.5,31,'#111','600',3)}<div class="sep"></div>${I('thinplus',24,14,24,-3,'#1a6bb0')}${T('Add',38,20,13,'#005a9e','600')}</div>
<div class="card">${I('thinplus',20,22,20,2,'#a3a3a3')}<div class="tx">${T('Add an',66,20,9,'#a6a6a6')}${T('artifact',64,20,9,'#a6a6a6')}</div></div>
<div class="sch">${I('hex',54,0,60)}<div class="tx">${T('Schedule',83,19.5,11,'#7c7c7c','',0,21)}${T('not set',64,19.5,11,'#7c7c7c','',0,21)}</div></div>`);
def('stage-node',`:host{position:absolute;left:147px;top:168px;width:300px;height:120px;background:#deecf9;border:1px solid #666;border-top:6px solid #0078d4;box-shadow:0 4px 12px rgba(0,0,0,.22)}.pill{position:absolute;display:flex;flex-direction:column;align-items:center;width:54px;border:1.500px solid #c8c8c8;border-radius:27px;background:#fff;box-shadow:0 2px 12px rgba(0,0,0,.16)}.l{left:-28px;top:7px;height:93px;padding-top:18px;gap:12px}.r{left:272px;top:27px;height:54px;padding-top:14px}.t{padding:25px 0 0 47px}.j{display:flex;align-items:center;margin-top:4px}`,
`<div class="t">${T('QA Environment',179,21.5,0,'#111','600')}<div class="j">${I('alert',20,-1,20,-1)}${T('1 job, 1 task',102,19.5,12,'#1a6bb0')}</div></div><div class="pill l">${I('bolt',21,0,22)}${I('person',20,0,22)}</div><div class="pill r">${I('person',20,0,22,-1)}</div>`);
def('stages-panel',`:host{display:block;position:relative;width:596px;height:439px;border:1px dashed #c4c4c4}.h{display:flex;align-items:center;height:49px;margin-top:30px}.sep{width:1px;height:24px;background:#111;margin-left:15px;margin-top:-4px}.w{position:absolute;left:0;top:227px;width:122px;height:2px;background:#bbb}`,
`<div class="h">${T('Stages',70,21.5,31,'#111','600',3)}<div class="sep"></div>${I('thinplus',24,15,24,-3,'#1a6bb0')}${T('Add',39,20,12,'#005a9e','600')}${I('chev',18,13,9,-2,'#1a6bb0')}</div><div class="w"></div><stage-node></stage-node>`);
def('pipeline-canvas',`:host{display:flex;height:507px;padding:9px 0 0 60px;align-items:flex-start}.w{width:30px;height:2px;background:#b5b5b5;margin-top:228px}.sb{display:flex;flex-direction:column;align-items:center;width:25px;height:507px;background:#f1f1f1;margin:-9px 0 0 528px}.th{width:21px;height:414px;background:#c1c1c1;margin-top:50px}`,
`<artifacts-panel></artifacts-panel><div class="w"></div><stages-panel></stages-panel><div class="sb">${I('tri',12,0,7,10)}<div class="th"></div>${I('trid',12,0,7,10)}</div>`);
def('pipeline-page',`:host{display:flex;flex-direction:column;width:1530px}`,`<info-banner></info-banner><pipeline-title></pipeline-title><pipeline-tabs></pipeline-tabs><pipeline-canvas></pipeline-canvas>`);
def('task-app',`:host{display:flex;height:60px;justify-content:center;align-items:center}:host([open]) .b{border-bottom:3px solid #0078d4}:host([active]) .b{background:#f0f0f0;width:70px}:host([multi]) .b{border-image:linear-gradient(90deg,#0078d4 80%,#6aaee4 80%) 3}.b{display:flex;width:58px;height:60px;padding-top:3px;align-items:center;justify-content:center;border-bottom:3px solid transparent}`,`<div class="b"><slot></slot></div>`);
const apps=[['edge',36,36],['folder',33,27,'open multi'],['store',35,36],['mail',36,34],['asus',36,36],['xbox',36,36],['m365',32,34],['chrome',36,36,'open active'],['phone',36,32],['eclipse',36,33],['opera',34,35],['postman',33,33],['photos',32,32,'open'],['npp',35,34,'open']];
def('task-bar',`:host{display:flex;align-items:center;height:60px;background:#d4d4d5;color:#111}.apps{display:flex;margin-left:29px;flex:none;width:1002px}.apps task-app{width:71.800px}.clk{width:92px;margin-left:21px;flex:none;display:flex;flex-direction:column;align-items:center}.n{position:relative;margin-left:29px;flex:none}.bd{position:absolute;left:12px;top:11px;width:24px;height:24px;border:1.500px solid #777;border-radius:50%;background:#d9d9d9;display:flex;align-items:center;justify-content:center}.e{width:1px;height:60px;background:#aaa;margin-left:31px}`,
`${I('win',24,24)}${I('tsearch',34,43)}${I('tview',24,43)}<div class="apps">${apps.map(a=>`<task-app ${a[3]||''}>${I(a[0],a[1],0,a[2])}</task-app>`).join('')}</div>
${I('weather',37,39,31,3)}${T('32°C',43,19,12,'','',2)}${I('up',18,39)}${I('meetnow',18,19)}${I('cloud',24,14)}${I('mic',15,16)}${I('sync',25,17,25,-1)}${I('battery',25,11,18,-2)}${I('wifi',19,15)}${I('vol',23,14)}${T('ENG',33,17,17,'','',1)}
<div class="clk">${T('13:29',41,17.5,0,'','',1)}${T('13-08-2023',92,17.5,0,'','',4)}</div><div class="n">${I('note',24,0)}<div class="bd">${T('8',10,16,0,'#111','600')}</div></div><div class="e"></div>`);
def('desktop-screen',`:host{display:flex;flex-direction:column;width:1920px;height:1080px;overflow:hidden}.w{display:flex;height:718px;flex:none}`,
`<browser-tabs></browser-tabs><browser-toolbar></browser-toolbar><bookmark-bar></bookmark-bar><share-bar></share-bar><azure-header></azure-header><div class="w"><azure-nav></azure-nav><pipeline-page></pipeline-page></div><task-bar></task-bar>`);
</script></body></html>
